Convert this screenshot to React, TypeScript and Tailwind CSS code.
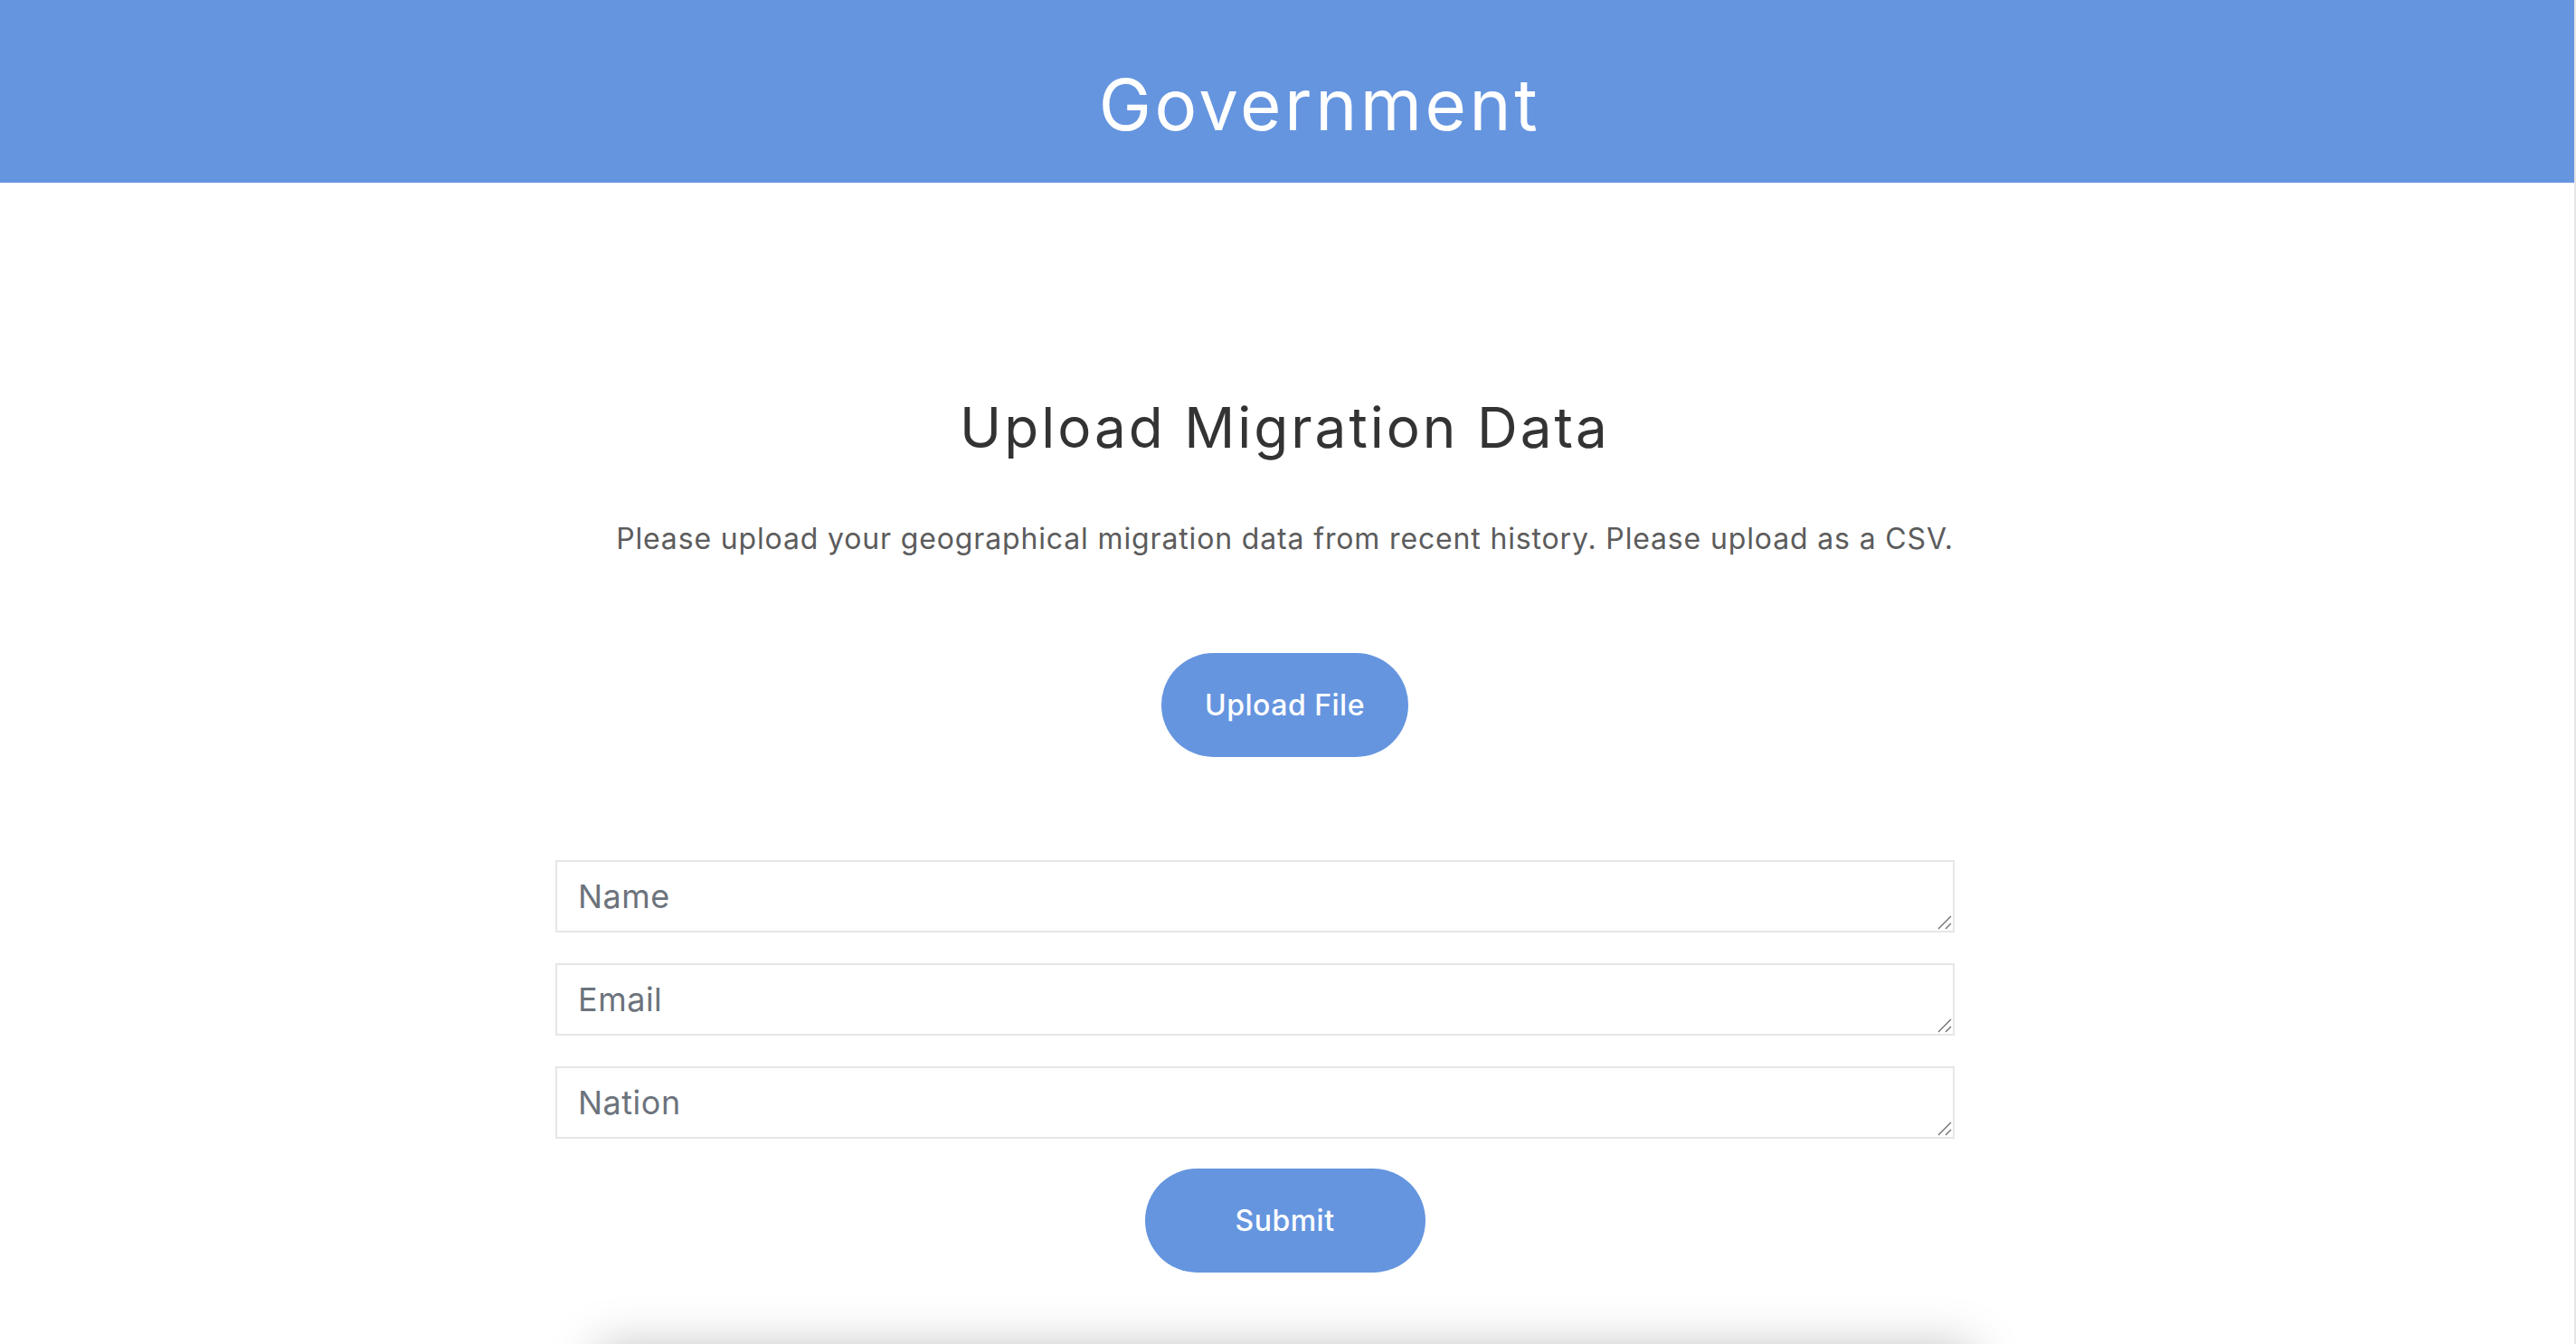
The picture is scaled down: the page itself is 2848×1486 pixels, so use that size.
import React from 'react';

const fields = ['Name', 'Email', 'Nation'];

function Grip() {
  return (
    <svg className="pointer-events-none absolute bottom-[3px] right-[3px]" width="16" height="16" viewBox="0 0 16 16">
      <path d="M1 15 L15 1" stroke="#6b6b6b" strokeWidth="1.3" />
      <path d="M9 15 L15 9" stroke="#6b6b6b" strokeWidth="1.3" />
    </svg>
  );
}

export default function App() {
  return (
    <div className="flex h-screen w-full overflow-hidden bg-white font-['Inter',sans-serif]">
      <div className="flex min-w-0 flex-1 flex-col">
        {/* top bar */}
        <header className="flex h-[202px] shrink-0 items-center justify-center bg-[#6595df] pl-[72px] pt-[30px]">
          <h1 className="text-[78px] font-normal leading-none tracking-[3.5px] text-white">Government</h1>
        </header>

        <main className="flex flex-col items-center pr-[5px]">
          <h2 className="mt-[240px] h-[62px] text-[62px] font-normal leading-none tracking-[3px] text-[#333333]">
            Upload Migration Data
          </h2>
          <p className="mt-[76px] h-[32px] text-[32px] leading-none tracking-[0.85px] text-[#5c5c5c]">
            Please upload your geographical migration data from recent history. Please upload as a CSV.
          </p>

          <button className="mt-[110px] flex h-[115px] w-[273px] items-center justify-center rounded-full bg-[#6595df] text-[32px] font-medium leading-none tracking-[0.5px] text-white">
            Upload File
          </button>

          <form className="mr-[66px] mt-[114px] flex w-[1547px] flex-col gap-[34px]">
            {fields.map((f) => (
              <div key={f} className="relative">
                <textarea
                  rows={1}
                  placeholder={f}
                  className="box-border block h-[80px] w-full resize-none border-2 border-[#e6e6e6] bg-white py-[16px] pl-[23px] pr-4 text-[36px] leading-[44px] tracking-[0.5px] text-[#333] placeholder:text-[#6c737c] focus:outline-none"
                />
                <Grip />
              </div>
            ))}
          </form>

          <button className="mt-[33px] flex h-[115px] w-[310px] items-center justify-center rounded-full bg-[#6595df] text-[32px] font-medium leading-none tracking-[0.5px] text-white">
            Submit
          </button>

          {/* next card, mostly below the fold */}
          <div className="mt-[83px] h-[400px] w-[1520px] shrink-0 bg-white shadow-[0_0_50px_rgba(0,0,0,0.25)]" />
        </main>
      </div>
      <div className="w-[2px] shrink-0 bg-[#e6e6e6]" />
    </div>
  );
}
